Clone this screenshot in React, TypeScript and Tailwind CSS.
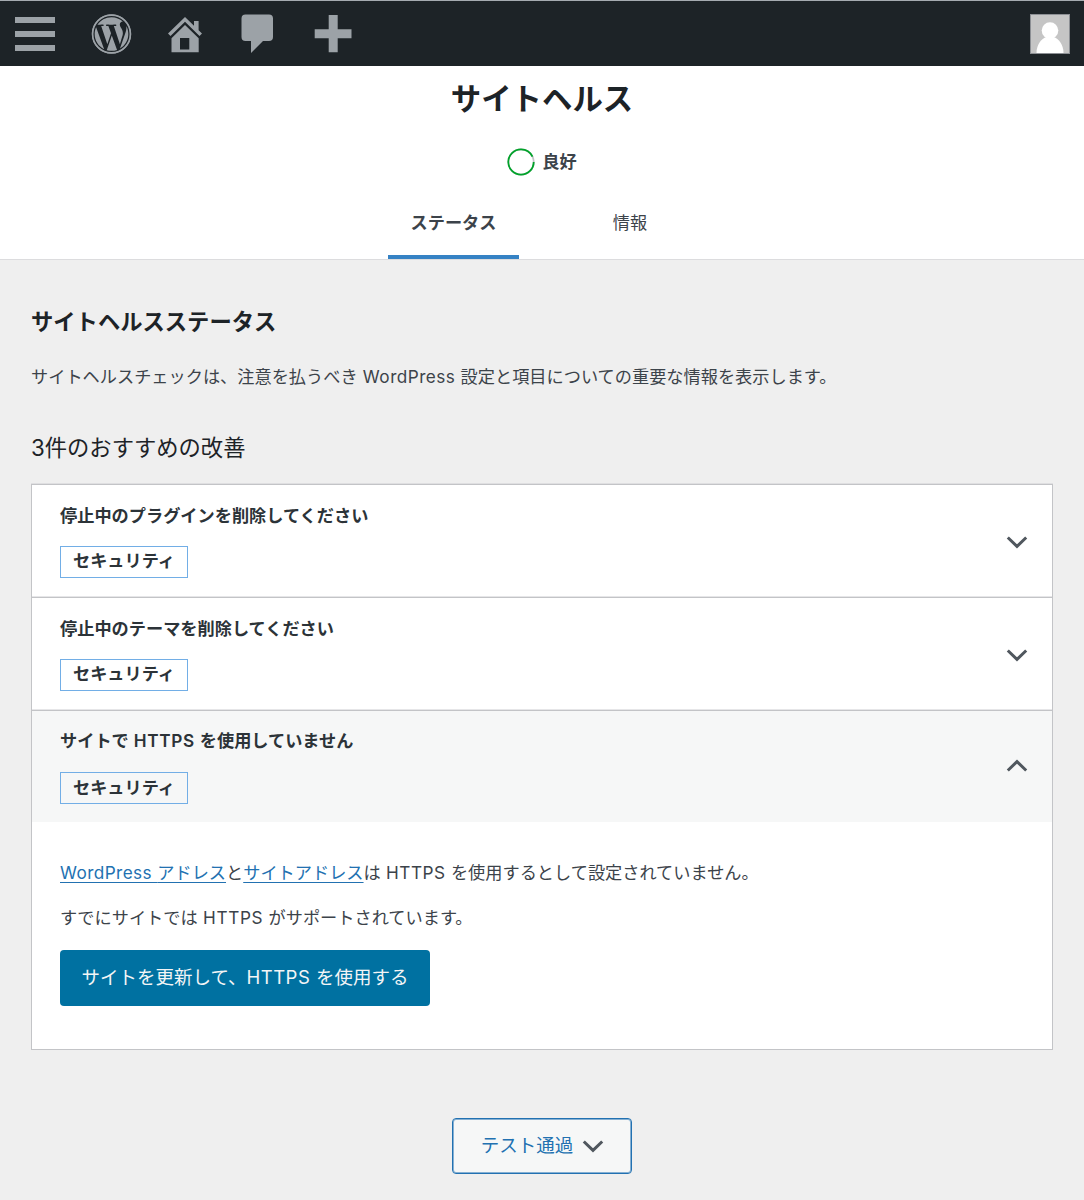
import { useState } from "react";
import { FaWordpress } from "react-icons/fa";

interface HealthIssue {
    id: string;
    label: React.ReactNode;
    badge: string;
}

const ISSUES: HealthIssue[] = [
    { id: "plugins", label: "停止中のプラグインを削除してください", badge: "セキュリティ" },
    { id: "themes", label: "停止中のテーマを削除してください", badge: "セキュリティ" },
    {
        id: "https",
        label: <>サイトで<span className="tracking-[0.65px]"> HTTPS </span>を使用していません</>,
        badge: "セキュリティ",
    },
];

function Chevron({ up = false }: { up?: boolean }) {
    return (
        <svg
            width="22"
            height="14"
            viewBox="0 0 22 14"
            fill="none"
            stroke="#50575e"
            strokeWidth="3"
            className={up ? "rotate-180" : ""}
        >
            <path d="M1.8 2.5L11 11.4L20.2 2.5" />
        </svg>
    );
}

function AdminBar() {
    return (
        <header className="flex h-[66px] items-start justify-between border-t border-[#a5abb0] bg-[#1d2327] text-[#9ca2a7]">
            <div className="flex">
                <svg width="70" height="65" viewBox="0 1 70 65" fill="currentColor">
                    <path d="M15 17h40v6H15zM15 31h40v6H15zM15 45h40v6H15z" />
                </svg>
                <svg width="82" height="65" viewBox="70 1 82 65" fill="none" stroke="currentColor" strokeWidth="1.7">
                    <FaWordpress x="91.25" y="13.75" size={40.5} stroke="none" />
                    <circle cx="111.5" cy="34" r="18.9" />
                </svg>
                <svg width="70" height="65" viewBox="152 1 70 65" fill="currentColor">
                    <path d="M185 17L168 33.5L170.5 36L185 21.8L199.5 36L202 33.5L198.6 30.2V21H194V25.7Z" />
                    <path fillRule="evenodd" d="M185 25L198.7 38.3V52.3H171.5V38.3ZM180 38V49.5H189.3V38Z" />
                </svg>
                <svg width="70" height="65" viewBox="222 1 70 65" fill="currentColor">
                    <path d="M245.5 14.5H269a4 4 0 0 1 4 4V37a4 4 0 0 1-4 4H263L251 53V41H245.5a4 4 0 0 1-4-4V18.5a4 4 0 0 1 4-4Z" />
                </svg>
                <svg width="70" height="65" viewBox="292 1 70 65" fill="currentColor">
                    <path d="M328.7 15h9v14.3h13.8v9h-13.8V52.3h-9V38.3h-14v-9h14z" />
                </svg>
            </div>
            <div className="mr-[14px] mt-[13px] h-10 w-10 border border-[#8c8f94] bg-[#c5c5c5]">
                <svg width="38" height="38" viewBox="0 0 38 38" fill="#fff">
                    <circle cx="19" cy="15.5" r="8.3" />
                    <path d="M5.5 38C5.5 30 10 24 15 22H23C28 24 32.5 30 32.5 38Z" />
                </svg>
            </div>
        </header>
    );
}

function PageHeader() {
    return (
        <section className="flex h-[193px] flex-col items-center bg-white">
            <h1 className="mt-[10px] text-[30.4px] leading-[46px] font-bold text-[#1d2327]">サイトヘルス</h1>
            <div className="mt-[26px] flex h-7 items-center gap-[7px]">
                <svg width="28" height="28" viewBox="0 0 28 28" fill="none" strokeWidth="1.8">
                    <circle cx="14" cy="14" r="12.7" stroke="#c3c4c7" />
                    <circle cx="14" cy="14" r="12.7" stroke="#00a32a" pathLength={100} strokeDasharray="93 7" />
                </svg>
                <span className="text-[17.2px] font-semibold">良好</span>
            </div>
            <nav className="mr-px mt-auto flex gap-[45px] text-[17.2px]">
                <a href="#status" className="flex h-[71px] w-[131px] justify-center border-b-4 border-[#3582c4] pt-[21px] leading-7 font-semibold">
                    ステータス
                </a>
                <a href="#info" className="flex h-[71px] w-[131px] justify-center pt-[21px] pl-px leading-7">
                    情報
                </a>
            </nav>
        </section>
    );
}

function IssueDetails() {
    return (
        <div className="h-[227px] px-7 pt-[37px] text-[17.2px] leading-7">
            <p>
                <a href="#wp" className="text-[#2271b1] underline underline-offset-[3px]">
                    <span className="tracking-[0.4px]">WordPress </span>アドレス
                </a>
                と
                <a href="#site" className="text-[#2271b1] underline underline-offset-[3px]">サイトアドレス</a>
                は<span className="tracking-[0.5px]"> HTTPS </span>を使用するとして設定されていません。
            </p>
            <p className="mt-[17px]">
                すでにサイトでは<span className="tracking-[0.6px]"> HTTPS </span>がサポートされています。
            </p>
            <button className="mt-[18px] h-[56px] w-[370px] rounded-[4px] bg-[#0071a1] pb-[3px] text-[18.5px] text-[#f3f5f6]">
                サイトを更新して、<span className="tracking-[0.5px]">HTTPS </span>を使用する
            </button>
        </div>
    );
}

export default function App() {
    const [openId, setOpenId] = useState<string | null>("https");

    return (
        <div
            lang="ja"
            className="h-[1200px] w-[1084px] overflow-hidden bg-[#efefef] font-[Inter,'Noto_Sans_CJK_JP',sans-serif] text-[#3c434a]"
        >
            <AdminBar />
            <PageHeader />

            <main className="border-t border-[#dcdcde] pl-[31px] pr-[31px]">
                <h2 className="mt-[46px] text-[22.3px] leading-8 font-bold text-[#1d2327]">サイトヘルスステータス</h2>
                <p className="mt-[25px] text-[17.2px] leading-7">
                    サイトヘルスチェックは、注意を払うべき<span className="tracking-[0.45px]"> WordPress </span>
                    設定と項目についての重要な情報を表示します。
                </p>
                <h3 className="mt-[41px] text-[22.3px] leading-8 text-[#1d2327]">3件のおすすめの改善</h3>

                <div className="mt-[20px] border border-[#c3c4c7] bg-white shadow-[0_-1px_0_#dfdfe1]">
                    {ISSUES.map((issue, i) => {
                        const open = openId === issue.id;
                        return (
                            <div key={issue.id} className={i > 0 ? "border-t border-[#c3c4c7] shadow-[0_-1px_0_#e6e6e8]" : ""}>
                                <button
                                    onClick={() => setOpenId(open ? null : issue.id)}
                                    className={`flex w-full items-center justify-between pl-7 pr-6 text-left text-[17.2px] font-semibold text-[#2c3338] ${open ? "h-[111px] bg-[#f6f7f7] pb-[2px]" : "h-[112px] pt-px"}`}
                                >
                                    <span className={`flex flex-col items-start ${open ? "gap-[17px]" : "gap-4 pb-1"}`}>
                                        <span className="leading-7">{issue.label}</span>
                                        <span className="flex h-8 w-[128px] items-center justify-center border border-[#72aee6] pb-px">
                                            {issue.badge}
                                        </span>
                                    </span>
                                    <Chevron up={open} />
                                </button>
                                {open && <IssueDetails />}
                            </div>
                        );
                    })}
                </div>

                <div className="mt-[68px] flex justify-center">
                    <button className="flex h-[56px] w-[180px] items-center justify-center gap-[9px] rounded-[4px] border-[1.5px] border-[#2271b1] bg-[#f6f7f7] pl-px text-[18.5px] text-[#2271b1] shadow-[inset_0_0_0_1px_#86b0d3]">
                        <span>テスト通過</span>
                        <Chevron />
                    </button>
                </div>
            </main>
        </div>
    );
}
